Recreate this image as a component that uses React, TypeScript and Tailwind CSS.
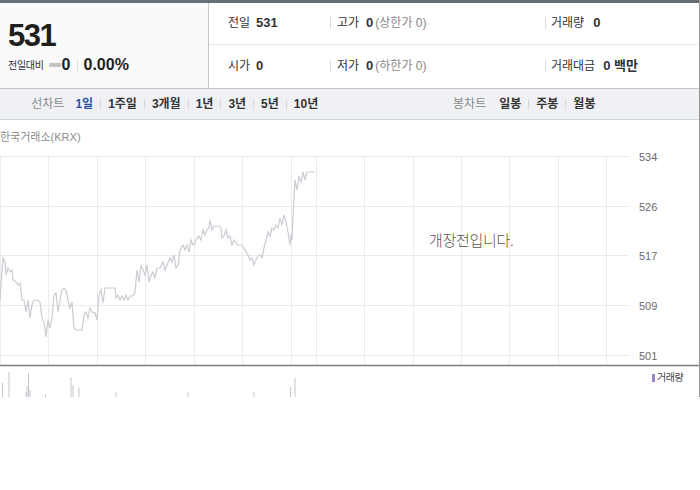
import React from "react";

const linePts: [number, number][] = [
  [0,300],[1,285],[3,258],[5,262],[6,275],[8,268],[10,272],[12,270],[13,280],[16,282],[18,285],[20,283],[22,300],[24,300],[26,312],[28,300],[30,318],[32,305],[34,300],[37,300],[40,302],[42,318],[44,322],[46,337],[48,320],[50,328],[52,318],[54,295],[56,293],[58,312],[60,300],[62,290],[64,288],[66,290],[68,300],[70,308],[72,302],[74,328],[76,330],[80,330],[82,330],[84,315],[86,312],[88,318],[90,308],[92,312],[95,313],[97,320],[99,295],[101,290],[103,303],[105,288],[110,288],[115,288],[116,298],[118,295],[120,300],[122,296],[124,300],[126,295],[128,300],[130,296],[133,296],[135,292],[137,270],[139,282],[141,265],[143,270],[145,275],[147,265],[149,282],[151,275],[153,272],[155,278],[157,268],[160,268],[163,262],[165,270],[167,265],[170,258],[172,262],[174,255],[176,268],[178,265],[180,250],[183,245],[185,250],[187,245],[189,252],[191,240],[193,245],[195,243],[197,238],[199,236],[201,240],[203,230],[205,235],[207,230],[209,228],[210,220],[212,230],[214,226],[216,226],[219,226],[221,228],[222,238],[224,236],[226,230],[228,238],[230,236],[232,245],[234,240],[236,243],[238,245],[240,245],[242,245],[244,248],[246,252],[248,255],[250,260],[252,258],[254,265],[256,260],[258,256],[260,255],[262,258],[264,248],[266,240],[268,232],[270,236],[272,228],[274,230],[276,225],[278,228],[280,218],[282,225],[284,215],[286,222],[288,232],[290,245],[291,234],[292,240],[293,215],[295,180],[297,190],[299,176],[301,182],[303,172],[305,180],[307,172],[315,172],
];

const bars: [number, number][] = [
  [2.5,383],[9,372],[26,392],[27,386],[28.5,373],[30,390],[45.5,394],[71,377],[73,385],[79,388],[116,392],[188,392],[254,392],[290.5,387],[295,378],
];

const vLines = [0.5, 48.5, 97.5, 145.5, 194.5, 242.5, 291.5, 316.5, 364.5, 413.5, 461.5, 509.5, 558.5, 606.5];
const hLines = [156.5, 206.5, 255.5, 305.5, 355.5];
const labels = ["534", "526", "517", "509", "501"];

const font = { fontFamily: '"Liberation Sans", "Noto Sans CJK KR", sans-serif' };

function Sep() {
  return <span className="inline-block w-px h-[11px] bg-[#dcdcdc] mx-[7px]" />;
}

export default function App() {
  return (
    <div className="w-[700px] h-[490px] bg-white" style={font}>
      <div className="w-[700px] h-[397px] overflow-hidden border-r border-[#9a9a9a] relative">
        {/* top strip */}
        <div className="h-[3px] bg-[#686d78]" />
        {/* header */}
        <div className="flex h-[86px] border-b border-[#c4c4c4]">
          <div className="w-[209px] bg-[#fafafa] border-r border-[#c8c8c8] pl-[8px] pt-[16px]">
            <div className="text-[31px] font-bold leading-[34px] tracking-[-1.5px] text-[#1e1e1e]">531</div>
            <div className="flex items-center mt-[2px] h-[20px]">
              <span className="text-[10px] tracking-[-0.3px] text-[#333]">전일대비</span>
              <span className="inline-block w-[12px] h-[4px] bg-[#c4c4c4] ml-[5px] rounded-[1px]" />
              <span className="text-[16px] font-bold text-[#222] ml-[1px] leading-none">0</span>
              <span className="inline-block w-px h-[11px] bg-[#dcdcdc] mx-[6px]" />
              <span className="text-[16px] font-bold text-[#222] leading-none">0.00%</span>
            </div>
          </div>
          <div className="flex-1 flex flex-col">
            <div className="flex items-center h-[42px] border-b border-[#e6e6e6] text-[12px] text-[#333] pb-[2px]">
              <div className="w-[121px] pl-[19px] flex items-center">
                <span>전일</span>
                <span className="font-bold text-[13px] ml-[6px]">531</span>
              </div>
              <div className="w-[215px] flex items-center">
                <span className="inline-block w-px h-[12px] bg-[#dcdcdc] mr-[6px]" />
                <span>고가</span>
                <span className="font-bold text-[13px] ml-[7px]">0</span>
                <span className="text-[#888] ml-[2px]">(상한가 0)</span>
              </div>
              <div className="flex items-center">
                <span className="inline-block w-px h-[12px] bg-[#dcdcdc] mr-[5px]" />
                <span>거래량</span>
                <span className="font-bold text-[13px] ml-[9px]">0</span>
              </div>
            </div>
            <div className="flex items-center flex-1 text-[12px] text-[#333] pb-[1px]">
              <div className="w-[121px] pl-[19px] flex items-center">
                <span>시가</span>
                <span className="font-bold text-[13px] ml-[6px]">0</span>
              </div>
              <div className="w-[215px] flex items-center">
                <span className="inline-block w-px h-[12px] bg-[#dcdcdc] mr-[6px]" />
                <span>저가</span>
                <span className="font-bold text-[13px] ml-[7px]">0</span>
                <span className="text-[#888] ml-[2px]">(하한가 0)</span>
              </div>
              <div className="flex items-center">
                <span className="inline-block w-px h-[12px] bg-[#dcdcdc] mr-[5px]" />
                <span>거래대금</span>
                <span className="font-bold text-[13px] ml-[8px]">0 백만</span>
              </div>
            </div>
          </div>
        </div>
        {/* tab bar */}
        <div className="flex h-[31px] bg-[#eff1f5] border-b border-[#cfd2d8] text-[12px]">
          <div className="w-[350px] flex items-center justify-center">
            <span className="text-[#888] mr-[11px]">선차트</span>
            <span className="font-bold text-[#2c50a6]">1일</span>
            <Sep />
            <span className="font-bold text-[#333]">1주일</span>
            <Sep />
            <span className="font-bold text-[#333]">3개월</span>
            <Sep />
            <span className="font-bold text-[#333]">1년</span>
            <Sep />
            <span className="font-bold text-[#333]">3년</span>
            <Sep />
            <span className="font-bold text-[#333]">5년</span>
            <Sep />
            <span className="font-bold text-[#333]">10년</span>
          </div>
          <div className="w-[350px] flex items-center justify-center">
            <span className="text-[#888] mr-[13px]">봉차트</span>
            <span className="font-bold text-[#333]">일봉</span>
            <Sep />
            <span className="font-bold text-[#333]">주봉</span>
            <Sep />
            <span className="font-bold text-[#333]">월봉</span>
          </div>
        </div>
        {/* chart */}
        <div className="relative h-[277px]">
          <div className="pt-[10px] text-[11px] text-[#8a8a8a] leading-[14px]">한국거래소(KRX)</div>
          <svg className="absolute left-0 top-0" width="700" height="277" viewBox="0 120 700 277">
            {hLines.map((y) => (
              <line key={y} x1="0" x2="629" y1={y} y2={y} stroke="#ebebeb" strokeWidth="1" />
            ))}
            {vLines.map((x) => (
              <line key={x} x1={x} x2={x} y1="156" y2="365" stroke="#ebebeb" strokeWidth="1" />
            ))}
            {labels.map((t, i) => (
              <text key={t} x="639" y={hLines[i] + 4} fontSize="11" fill="#6a6a6a" fontFamily='"Liberation Sans", sans-serif'>
                {t}
              </text>
            ))}
            <polyline
              points={linePts.map(([x, y]) => `${x},${y}`).join(" ")}
              fill="none"
              stroke="#c9ccd2"
              strokeWidth="1.2"
            />
            <line x1="0" x2="700" y1="365.5" y2="365.5" stroke="#7d7d7d" strokeWidth="1.5" />
            {bars.map(([x, y], i) => (
              <line key={i} x1={x} x2={x} y1={y} y2="400" stroke="#c3c6cc" strokeWidth="1" />
            ))}
            <rect x="652" y="374" width="3" height="8" fill="#9a86c6" />
          </svg>
          <div className="absolute left-[429px] top-[110px] text-[15px] text-[#555] leading-[20px] tracking-[-0.3px]" style={{ fontFamily: '"Noto Sans CJK KR", sans-serif', fontWeight: 300 }}>
            개장전입니다.
          </div>
          <div className="absolute left-[657px] top-[252px] text-[10px] text-[#444] leading-[12px] tracking-[-0.5px]">거래량</div>
        </div>
      </div>
    </div>
  );
}
